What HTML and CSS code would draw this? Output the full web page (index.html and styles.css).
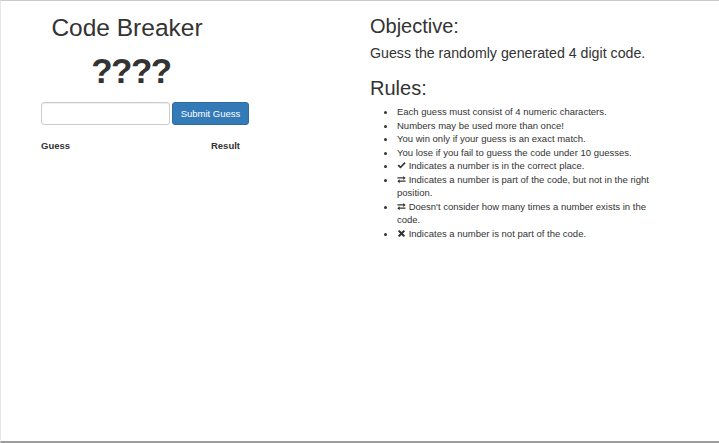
FILE: index.html
```html
<!DOCTYPE html>
<html lang="en">
<head>
<meta charset="utf-8">
<title>Code Breaker</title>
<link rel="stylesheet" href="styles.css">
</head>
<body>
<div class="frame">
  <div class="layout">
    <section class="game">
      <h1 class="title">Code Breaker</h1>
      <div class="code">????</div>
      <form class="guess-form">
        <input class="guess-input" type="text" aria-label="Guess">
        <button class="btn-submit" type="button">Submit Guess</button>
      </form>
      <div class="table-head">
        <span>Guess</span>
        <span>Result</span>
      </div>
    </section>
    <section class="info">
      <h3 class="heading">Objective:</h3>
      <p class="lead">Guess the randomly generated 4 digit code.</p>
      <h3 class="heading rules-heading">Rules:</h3>
      <ul class="rules">
        <li>Each guess must consist of 4 numeric characters.</li>
        <li>Numbers may be used more than once!</li>
        <li>You win only if your guess is an exact match.</li>
        <li>You lose if you fail to guess the code under 10 guesses.</li>
        <li><svg class="icon" viewBox="0 0 10 10"><path d="M0.6 5.4 L2.2 4 L3.9 5.7 L8.3 1.2 L9.6 2.6 L3.9 8.4 Z" fill="#333"/></svg> Indicates a number is in the correct place.</li>
        <li><svg class="icon" viewBox="0 0 10 10"><path d="M0.5 2.6 H7 V1 L9.6 3.3 L7 5.6 V4 H0.5 Z M9.5 6.2 H3 V4.6 L0.4 6.9 L3 9.2 V7.6 H9.5 Z" fill="#333"/></svg> Indicates a number is part of the code, but not in the right position.</li>
        <li><svg class="icon" viewBox="0 0 10 10"><path d="M0.5 2.6 H7 V1 L9.6 3.3 L7 5.6 V4 H0.5 Z M9.5 6.2 H3 V4.6 L0.4 6.9 L3 9.2 V7.6 H9.5 Z" fill="#333"/></svg> Doesn't consider how many times a number exists in the code.</li>
        <li><svg class="icon" viewBox="0 0 10 10"><path d="M1 2.6 L2.6 1 L5 3.4 L7.4 1 L9 2.6 L6.6 5 L9 7.4 L7.4 9 L5 6.6 L2.6 9 L1 7.4 L3.4 5 Z" fill="#333"/></svg> Indicates a number is not part of the code.</li>
      </ul>
    </section>
  </div>
</div>
</body>
</html>
```

FILE: styles.css
```css
* { box-sizing: border-box; }

html, body {
  margin: 0;
  padding: 0;
  background: #fff;
}

body {
  font-family: "Liberation Sans", Arial, Helvetica, sans-serif;
  color: #333;
}

.frame {
  height: 443px;
  border-top: 1px solid #c9c9c9;
  border-left: 1px solid #e6e6e6;
  border-bottom: 2px solid #9d9d9d;
  background: #fff;
}

.layout {
  display: grid;
  grid-template-columns: 329px 1fr;
  padding-left: 40px;
}

.game {
  padding-top: 13px;
  width: 209px;
}

.title {
  margin: 0;
  width: 172px;
  text-align: center;
  font-size: 24.5px;
  line-height: 27px;
  font-weight: 400;
  color: #333;
}

.code {
  margin-top: 10px;
  width: 180px;
  text-align: center;
  font-size: 35px;
  line-height: 40px;
  font-weight: 700;
  letter-spacing: -1.5px;
  color: #333;
}

.guess-form {
  margin-top: 11px;
  display: flex;
  gap: 2px;
  height: 23px;
}

.guess-input {
  width: 129px;
  height: 23px;
  border: 1px solid #ccc;
  border-radius: 3px;
  box-shadow: inset 0 1px 1px rgba(0,0,0,.075);
  padding: 3px 6px;
  font: inherit;
  font-size: 9.5px;
  margin: 0;
}

.btn-submit {
  width: 77px;
  height: 23px;
  margin: 0;
  padding: 0;
  background: #337ab7;
  border: 1px solid #2e6da4;
  border-radius: 3px;
  color: #fff;
  font-family: inherit;
  font-size: 9.5px;
}

.table-head {
  margin-top: 14px;
  display: flex;
  justify-content: space-between;
  width: 199px;
  font-size: 9.5px;
  line-height: 13.5px;
  font-weight: 700;
}

.info {
  padding-top: 14px;
}

.heading {
  margin: 0;
  font-size: 20px;
  line-height: 22px;
  font-weight: 400;
  color: #333;
}

.lead {
  margin: 6px 0 0;
  font-size: 14.2px;
  line-height: 20px;
}

.rules-heading {
  margin-top: 14px;
}

.rules {
  margin: 6px 0 0;
  padding-left: 27px;
  width: 284px;
  font-size: 9.5px;
  line-height: 13.5px;
}

.rules li::marker {
  font-size: 11px;
}

.icon {
  width: 9px;
  height: 9px;
  vertical-align: -1px;
}
```
